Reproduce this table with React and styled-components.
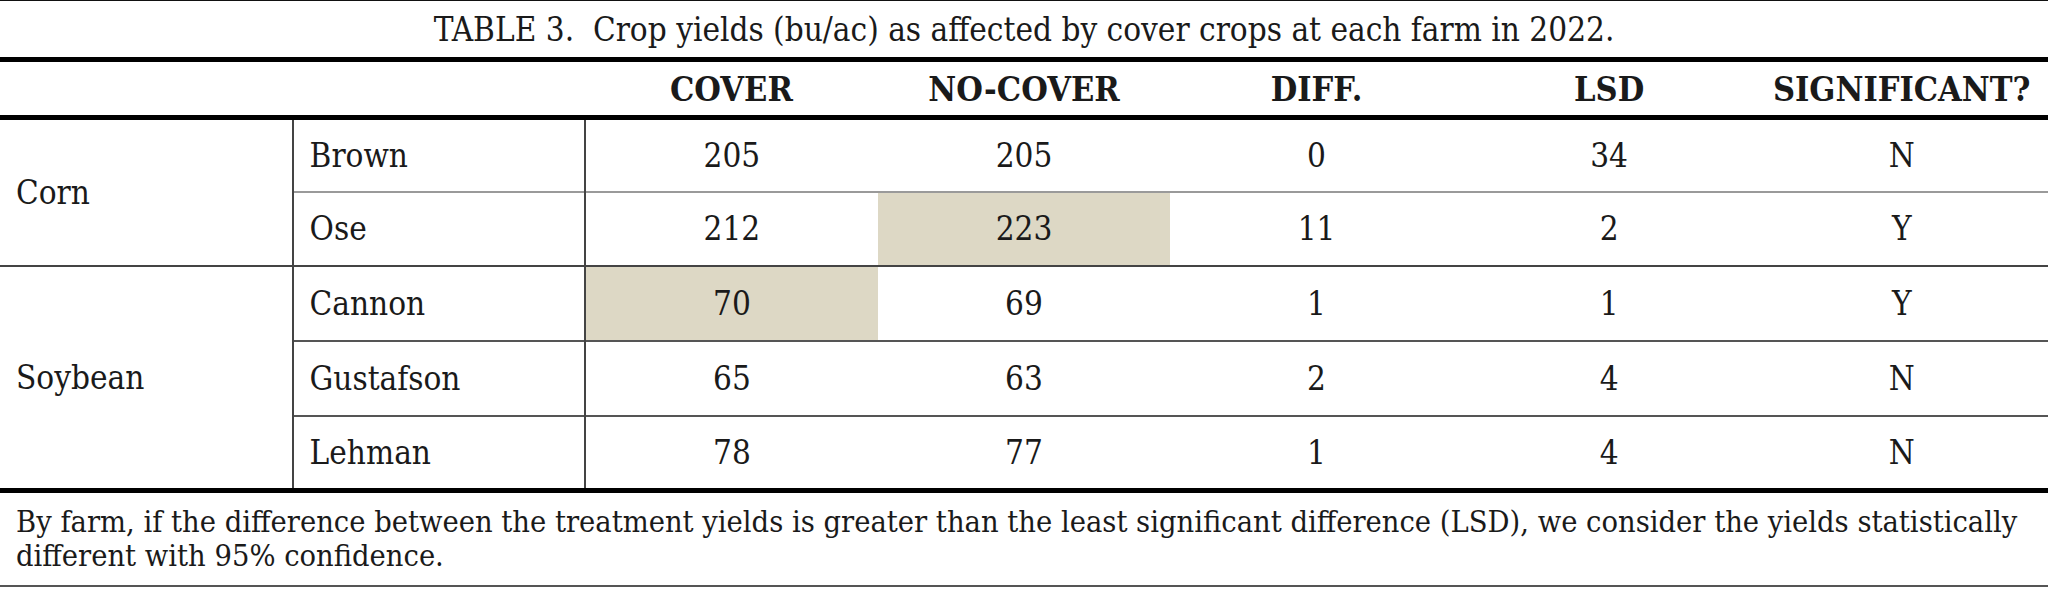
import React from "react";
import styled, { createGlobalStyle } from "styled-components";

const Global = createGlobalStyle`
  html, body { margin: 0; padding: 0; background: #fff; }
  body { width: 2048px; height: 589px; overflow: hidden; }
`;

const Table = styled.table`
  width: 2048px;
  table-layout: fixed;
  border-collapse: collapse;
  font-family: "DejaVu Serif Condensed", "DejaVu Serif", serif;
  font-stretch: condensed;
  color: #1a1a1a;
  font-size: 33px;
`;

const TitleCell = styled.th`
  height: 56px;
  padding: 0;
  border-top: 1px solid #111;
  border-bottom: 5px solid #000;
  font-weight: normal;
  text-align: center;
  vertical-align: middle;
`;

const HeadCell = styled.th`
  height: 53px;
  padding: 0;
  border-bottom: 5px solid #000;
  font-weight: bold;
  font-size: 34px;
  text-align: center;
  vertical-align: middle;
`;

const Row = styled.tr`
  height: ${(p) => (p.$first ? "74px" : "74.7px")};
  border-top: 2px solid ${(p) => p.$line || "transparent"};
`;

const LabelCell = styled.td`
  padding: 0 0 0 16px;
  text-align: left;
  vertical-align: middle;
  border-right: ${(p) => (p.$divider ? "2px solid #444" : "none")};
`;

const DataCell = styled.td`
  padding: 0;
  text-align: center;
  vertical-align: middle;
  background: ${(p) => (p.$shade ? "#ddd8c5" : "transparent")};
`;

const NoteCell = styled.td`
  height: 80px;
  padding: 12px 16px 0 16px;
  border-top: 5px solid #000;
  border-bottom: 2px solid #555;
  font-size: 30.5px;
  line-height: 34px;
  text-align: left;
  vertical-align: top;
`;

const cols = ["COVER", "NO-COVER", "DIFF.", "LSD", "SIGNIFICANT?"];

const groups = [
  {
    crop: "Corn",
    rows: [
      { farm: "Brown", v: ["205", "205", "0", "34", "N"] },
      { farm: "Ose", v: ["212", "223", "11", "2", "Y"], shade: 1, line: "#9a9a9a" },
    ],
  },
  {
    crop: "Soybean",
    rows: [
      { farm: "Cannon", v: ["70", "69", "1", "1", "Y"], shade: 0 },
      { farm: "Gustafson", v: ["65", "63", "2", "4", "N"], line: "#555" },
      { farm: "Lehman", v: ["78", "77", "1", "4", "N"], line: "#555" },
    ],
  },
];

export default function App() {
  return (
    <>
      <Global />
      <Table>
        <colgroup>
          {Array.from({ length: 7 }).map((_, i) => (
            <col key={i} />
          ))}
        </colgroup>
        <thead>
          <tr>
            <TitleCell colSpan={7}>
              TABLE 3.&nbsp; Crop yields (bu/ac) as affected by cover crops at each farm in 2022.
            </TitleCell>
          </tr>
          <tr>
            <HeadCell />
            <HeadCell />
            {cols.map((c) => (
              <HeadCell key={c}>{c}</HeadCell>
            ))}
          </tr>
        </thead>
        <tbody>
          {groups.map((g, gi) =>
            g.rows.map((r, ri) => (
              <Row
                key={r.farm}
                $first={gi === 0 && ri === 0}
                $line={ri === 0 ? (gi === 0 ? undefined : "#444") : r.line}
              >
                {ri === 0 && (
                  <LabelCell rowSpan={g.rows.length} $divider>
                    {g.crop}
                  </LabelCell>
                )}
                <LabelCell $divider>{r.farm}</LabelCell>
                {r.v.map((val, vi) => (
                  <DataCell key={vi} $shade={r.shade === vi}>
                    {val}
                  </DataCell>
                ))}
              </Row>
            ))
          )}
        </tbody>
        <tfoot>
          <tr>
            <NoteCell colSpan={7}>
              By farm, if the difference between the treatment yields is greater than the least significant
              difference (LSD), we consider the yields statistically different with 95% confidence.
            </NoteCell>
          </tr>
        </tfoot>
      </Table>
    </>
  );
}
